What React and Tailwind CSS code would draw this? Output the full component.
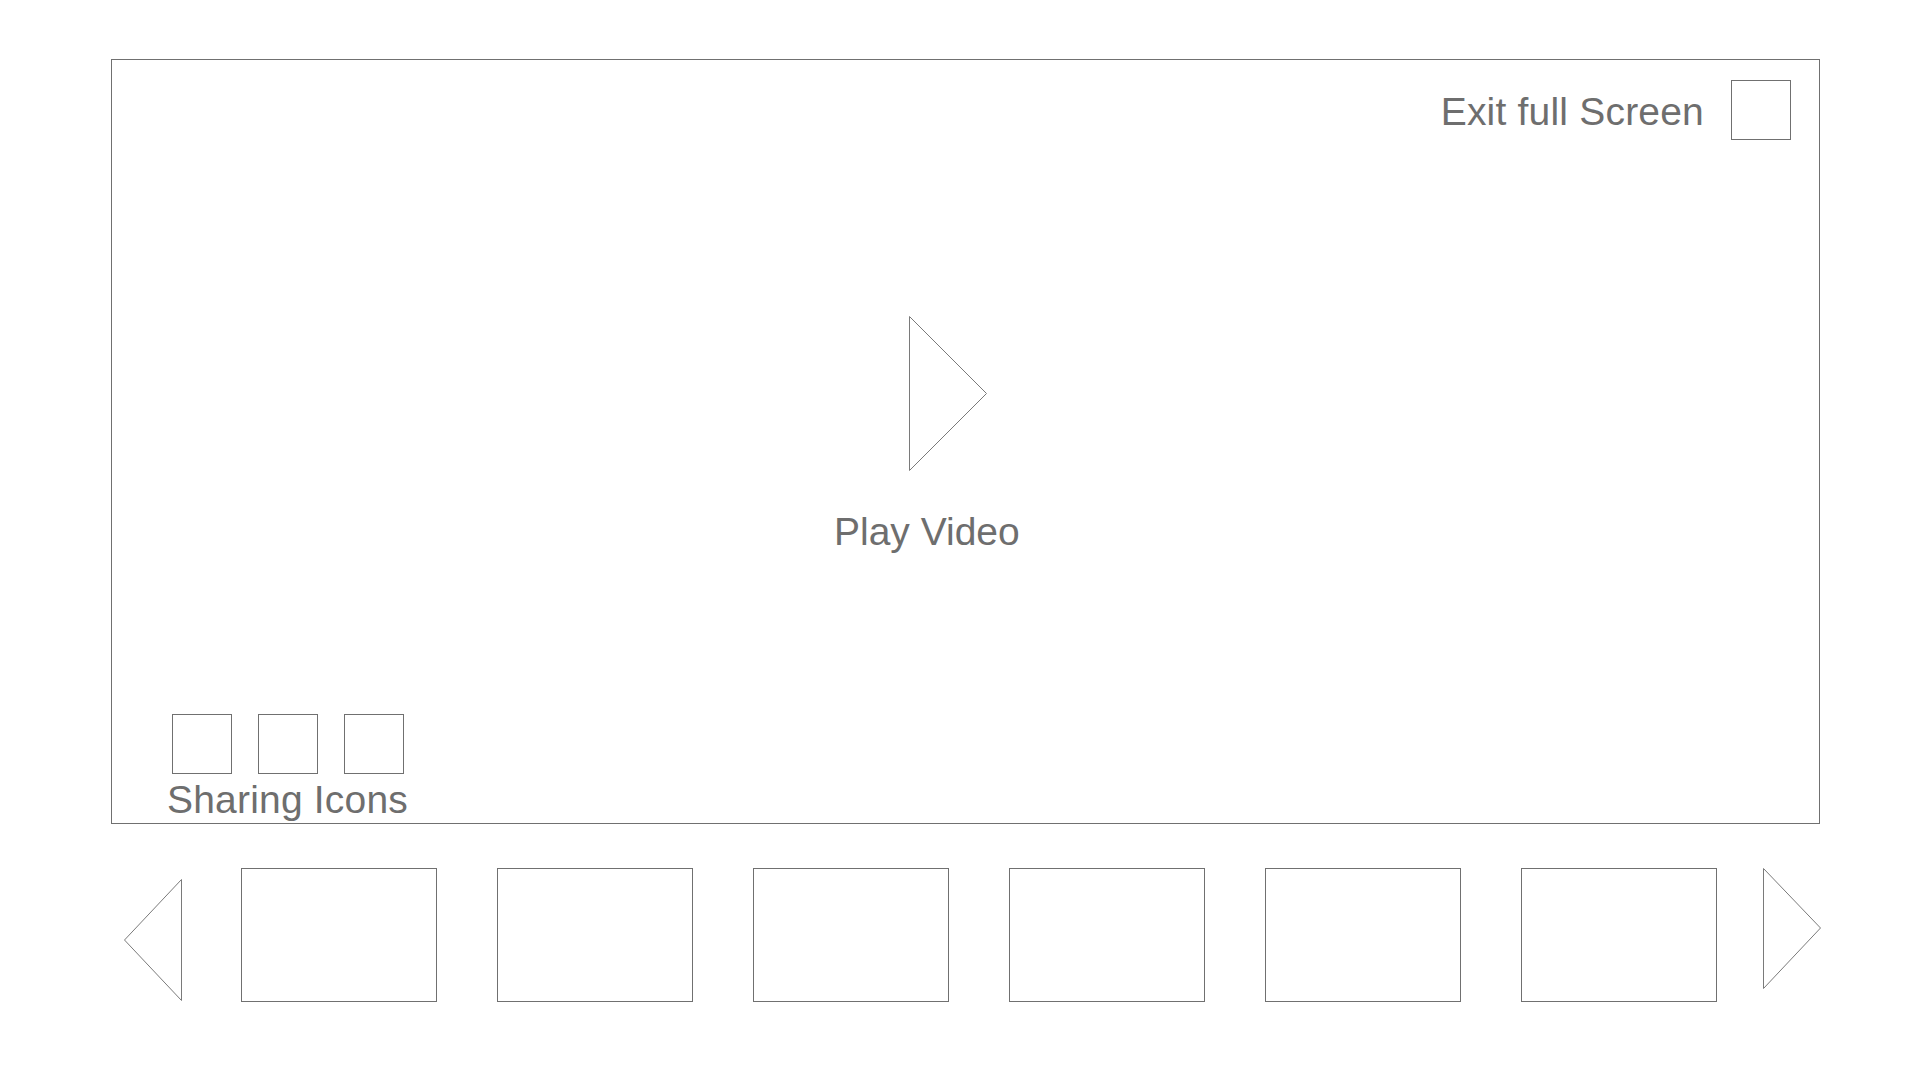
import React from 'react';

const font = { fontFamily: '"Liberation Sans", Arial, sans-serif' };

function Tri({ w, h, points, className }) {
    return (
        <svg width={w} height={h} viewBox={`0 0 ${w} ${h}`} className={className}>
            <polygon points={points} fill="none" stroke="#7a7a7a" strokeWidth="1" />
        </svg>
    );
}

export default function App() {
    const thumbs = [0, 1, 2, 3, 4, 5];
    return (
        <div className="w-[1920px] h-[1080px] bg-white text-[#6e6e6e]" style={font}>
            <div className="pt-[59px] pl-[111px]">
                {/* Video frame */}
                <div className="w-[1709px] h-[765px] border border-[#707070] flex flex-col">
                    {/* Top bar */}
                    <div className="flex items-center justify-end mt-[20px] pr-[28px] h-[60px]">
                        <span className="text-[39px] leading-[39px] mr-[27px] pt-[2px] tracking-[0.2px]">Exit full Screen</span>
                        <div className="w-[60px] h-[60px] border border-[#707070]" />
                    </div>

                    {/* Play */}
                    <div className="flex flex-col items-start ml-[722px] mt-[176px]">
                        <Tri w={78} h={155} className="ml-[75px]" points="0.5,0.5 77.5,77.5 0.5,154.5" />
                        <span className="text-[39px] leading-[39px] mt-[41px]">Play Video</span>
                    </div>

                    {/* Sharing */}
                    <div className="flex flex-col items-center w-[245px] ml-[53px] mt-[163px]">
                        <div className="flex gap-[26px]">
                            <div className="w-[60px] h-[60px] border border-[#707070]" />
                            <div className="w-[60px] h-[60px] border border-[#707070]" />
                            <div className="w-[60px] h-[60px] border border-[#707070]" />
                        </div>
                        <span className="text-[39px] leading-[30px] whitespace-nowrap mt-[11px] tracking-[0.2px]">Sharing Icons</span>
                    </div>
                </div>
            </div>

            {/* Thumbnail strip */}
            <div className="flex items-start mt-[44px] ml-[124px]">
                <Tri w={58} h={122} className="mt-[11px]" points="57.5,0.5 0.5,61 57.5,121.5" />
                <div className="flex gap-[60px] ml-[59px]">
                    {thumbs.map((t) => (
                        <div key={t} className="w-[196px] h-[134px] border border-[#707070]" />
                    ))}
                </div>
                <Tri w={58} h={121} className="ml-[46px]" points="0.5,0.5 57.5,60 0.5,120.5" />
            </div>
        </div>
    );
}
